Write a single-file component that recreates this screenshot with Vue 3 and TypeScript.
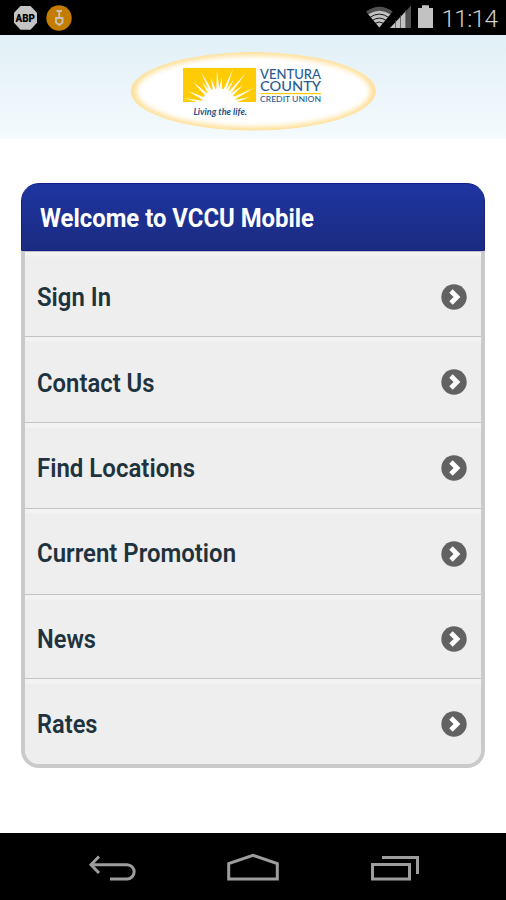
<script setup lang="ts">
interface MenuItem {
  label: string
  width: number
  height: number
  baseline: number
}

const items: MenuItem[] = [
  { label: 'Sign In', width: 74, height: 85, baseline: 27 },
  { label: 'Contact Us', width: 117.5, height: 86, baseline: 26.7 },
  { label: 'Find Locations', width: 158, height: 86, baseline: 25.6 },
  { label: 'Current Promotion', width: 199, height: 86, baseline: 25.3 },
  { label: 'News', width: 59, height: 84, baseline: 26 },
  { label: 'Rates', width: 60.5, height: 86, baseline: 25.6 },
]

// Sun rays: tips outside the disc, each tapering out from the sun's rim
const centre = { x: 218.5, y: 106 }
const tips: [number, number][] = [
  [184, 98], [188, 91], [193, 82], [202, 82], [201, 72], [211, 78], [217, 70],
  [222, 77], [233, 69], [234, 79], [246, 73], [243, 85], [254, 88], [250, 97],
]
const rays = tips.map(([x, y]) => {
  const a = Math.atan2(y - centre.y, x - centre.x)
  const p = (d: number) => `${centre.x + 17 * Math.cos(a + d)},${centre.y + 17 * Math.sin(a + d)}`
  return `${p(-0.09)} ${x},${y} ${p(0.09)}`
})
</script>

<template>
  <div class="screen">
    <header class="status">
      <svg class="status-art" width="506" height="35" viewBox="0 0 506 35">
        <path d="M20.500 6h10l6.500 6.700v10l-6.500 7h-10l-6.500-7v-10z" fill="#c4c4c4" />
        <text x="15.500" y="22" class="abp" textLength="19.500" lengthAdjust="spacingAndGlyphs">ABP</text>
        <circle cx="59" cy="18" r="12.700" fill="#c47c00" />
        <path d="M56.500 11h5.500M59.200 11v8M56 18h6.500v4.500l-3.200 2.500l-3.300-2.500z" fill="none" stroke="#c9c2b4" stroke-width="1.900" />
        <path d="M379.300 27.500L366 11.500Q379.300 2 392.700 11.500z" fill="#505050" />
        <path d="M379.300 27.500L368.300 14.300Q379.300 7 390.300 14.300z" fill="#c2c2c2" />
        <g fill="none" stroke="#000" stroke-width=".9">
          <path d="M369.500 17.700Q379.300 10.500 389.100 17.700" />
          <path d="M372 20.700Q379.300 15.500 386.600 20.700" />
          <path d="M374.500 23.500Q379.300 20.500 384.100 23.500" />
        </g>
        <path d="M390 28L406 11v17z" fill="#c2c2c2" />
        <path d="M406 11l5-5.500V28h-5z" fill="#505050" />
        <path d="M395.500 20v8M400.500 15v13M405.700 10v18" stroke="#444" stroke-width=".7" />
        <path d="M418 8h4V5.300h7V8h4v20h-15z" fill="#c2c2c2" />
        <text x="441.500" y="26.700" class="clock" textLength="56.500" lengthAdjust="spacing">11:14</text>
      </svg>
    </header>

    <div class="banner">
      <svg width="506" height="104" viewBox="0 35 506 104">
        <defs>
          <filter id="soft" x="-10%" y="-20%" width="120%" height="140%"><feGaussianBlur stdDeviation="2.600" /></filter>
          <clipPath id="oval"><ellipse cx="253.300" cy="91.300" rx="122.700" ry="39.400" /></clipPath>
          <clipPath id="sky"><rect x="183" y="67.700" width="73.300" height="34.300" /></clipPath>
        </defs>
        <g clip-path="url(#oval)">
          <ellipse cx="253.300" cy="91.300" rx="122.700" ry="39.400" fill="#ffe09a" />
          <ellipse cx="253.300" cy="91.300" rx="117" ry="35.500" fill="#fff" filter="url(#soft)" />
        </g>
        <g clip-path="url(#sky)">
          <rect x="183" y="67.700" width="73.300" height="34.300" fill="#ffcb05" />
          <polygon v-for="(ray, i) in rays" :key="i" :points="ray" fill="#fffdf0" />
          <ellipse cx="219" cy="105" rx="17.500" ry="16.500" fill="#fff" />
        </g>
        <g class="brand">
          <text x="260" y="78.500" font-size="13.300" textLength="61" lengthAdjust="spacingAndGlyphs">VENTURA</text>
          <text x="260" y="90.500" font-size="13.300" textLength="61" lengthAdjust="spacingAndGlyphs">COUNTY</text>
          <text x="260" y="101.700" font-size="7.600" textLength="61" lengthAdjust="spacingAndGlyphs">CREDIT UNION</text>
          <text x="193.500" y="114.800" class="motto" textLength="53.500" lengthAdjust="spacingAndGlyphs">Living the life.</text>
        </g>
        <rect x="260.500" y="93" width="60.500" height="1.200" fill="#ffcb05" />
      </svg>
    </div>

    <main class="content">
      <section class="card">
        <h1 class="title">
          <svg class="title-text" width="300" height="36">
            <text x="0" y="26.300" textLength="274" lengthAdjust="spacingAndGlyphs">Welcome to VCCU Mobile</text>
          </svg>
        </h1>
        <ul class="list">
          <li v-for="item in items" :key="item.label" class="row" :style="{ height: item.height + 'px' }">
            <svg class="label" width="260" height="36">
              <text x="0" :y="item.baseline" :textLength="item.width" lengthAdjust="spacingAndGlyphs">{{ item.label }}</text>
            </svg>
            <svg class="go" width="26" height="26" viewBox="0 0 26 26">
              <circle cx="13" cy="13" r="12.700" fill="#626262" />
              <path d="M10 7L16 13L10 19" fill="none" stroke="#fff" stroke-width="4.800" />
            </svg>
          </li>
        </ul>
      </section>
    </main>

    <nav class="navbar">
      <svg width="506" height="67" viewBox="0 833 506 67" fill="none" stroke="#9d9d9d" stroke-width="3">
        <path d="M91 864.700H127a7 7 0 0 1 0 14.300H110" />
        <path d="M99 856.500L91 864.700L99 873" />
        <path d="M228.700 879V863.500L253 855.300L277.300 863.500V879z" />
        <path d="M372.500 864.500h37v14.500h-37zM382 857.500h35.500V874" />
      </svg>
    </nav>
  </div>
</template>

<style>
body {
  margin: 0;
  background: #fff;
}
</style>

<style scoped>
.screen {
  width: 506px;
  height: 900px;
  display: flex;
  flex-direction: column;
  overflow: hidden;
  background: #fff;
  font-family: Roboto, "Liberation Sans", sans-serif;
}

svg {
  display: block;
  flex: none;
}

.status {
  height: 35px;
  background: #000;
}

.abp {
  font: 900 11.5px Roboto, sans-serif;
  fill: #000;
}

.clock {
  font: 300 24.5px Roboto, sans-serif;
  fill: #d0d0d0;
}

.banner {
  height: 104px;
  background: linear-gradient(#e1f0f7, #f4fafd);
}

.brand text {
  font-family: Lato, sans-serif;
  font-weight: 500;
  fill: #285b91;
}

.brand .motto {
  font: italic 700 10px Lato, sans-serif;
  fill: #1f5088;
}

.content {
  flex: 1;
  padding: 44px 21px 0;
}

.card {
  height: 585px;
  display: flex;
  flex-direction: column;
  box-sizing: border-box;
}

.title {
  margin: 0;
  height: 68px;
  box-sizing: border-box;
  padding: 17px 0 0 17.5px;
  border: 1px solid #13208a;
  border-radius: 18px 18px 0 0;
  background: linear-gradient(#1f35a2, #1a2b80);
}

.title-text text {
  font-size: 25px;
  font-weight: 700;
  fill: #fff;
}

.list {
  flex: 1;
  margin: 0;
  padding: 0;
  list-style: none;
  border: 4px solid #cacaca;
  border-top: 0;
  border-radius: 0 0 18px 18px;
  background: #eee;
  overflow: hidden;
}

.row {
  box-sizing: border-box;
  display: flex;
  align-items: center;
  justify-content: space-between;
  padding: 6px 14px 0 12px;
  border-top: 1px solid #c3c3c3;
  background: linear-gradient(#f3f3f3 0 4px, #eee 5px);
}

.go {
  margin-top: -1px;
}

.label text {
  font-size: 25px;
  font-weight: 600;
  fill: #1e333e;
}

.navbar {
  height: 67px;
  background: #000;
}
</style>
